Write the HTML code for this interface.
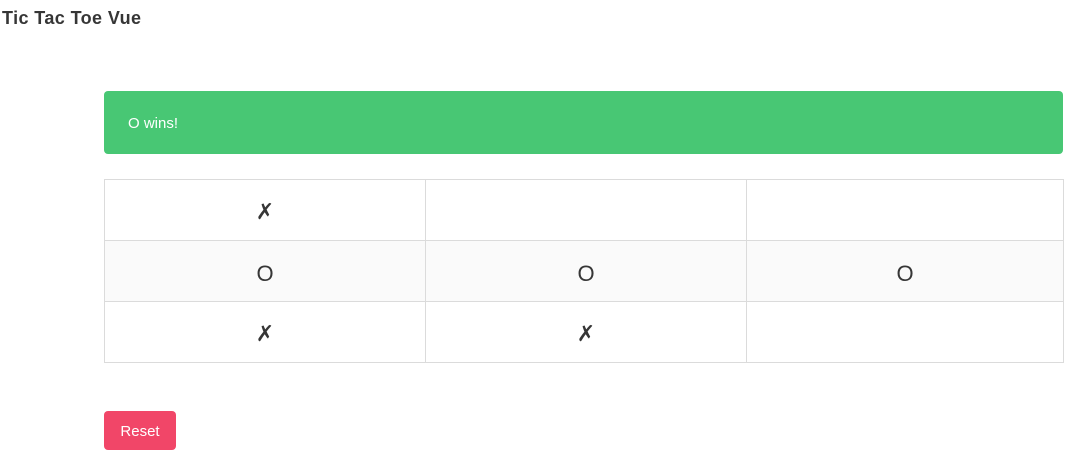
<!DOCTYPE html>
<html><head><style>
body{margin:0;background:#fff;font-family:"Liberation Sans",sans-serif;color:#363636;width:1091px;height:467px;overflow:hidden;position:relative}
h1{position:absolute;left:2px;top:8px;margin:0;font-size:18px;font-weight:bold;color:#363636;letter-spacing:0.4px}
.alert{position:absolute;left:104px;top:91px;width:959px;height:63px;background:#48c774;border-radius:4px;color:#fff;font-size:15px;box-sizing:border-box;padding-left:24px;line-height:66px}
table{position:absolute;left:104px;top:179px;width:960px;border-collapse:collapse}
td{border:1px solid #dbdbdb;height:60px;padding:5px 0 0 0;box-sizing:border-box;text-align:center;font-size:22px;font-family:"DejaVu Sans",sans-serif;color:#363636}
tr:nth-child(2) td{background:#fafafa}
.b{position:absolute;left:104px;top:411px;width:72px;height:39px;background:#f14668;border-radius:4px;color:#fff;font-size:15px;text-align:center;line-height:42px}
</style></head><body>
<h1>Tic Tac Toe Vue</h1>
<div class="alert">O wins!</div>
<table>
<tr><td style="width:321px;height:61px">✗</td><td style="width:321px"></td><td></td></tr>
<tr><td style="font-family:'Liberation Sans',sans-serif;height:61px">O</td><td style="font-family:'Liberation Sans',sans-serif">O</td><td style="font-family:'Liberation Sans',sans-serif">O</td></tr>
<tr><td style="height:61px">✗</td><td>✗</td><td></td></tr>
</table>
<div class="b">Reset</div>
</body></html>
